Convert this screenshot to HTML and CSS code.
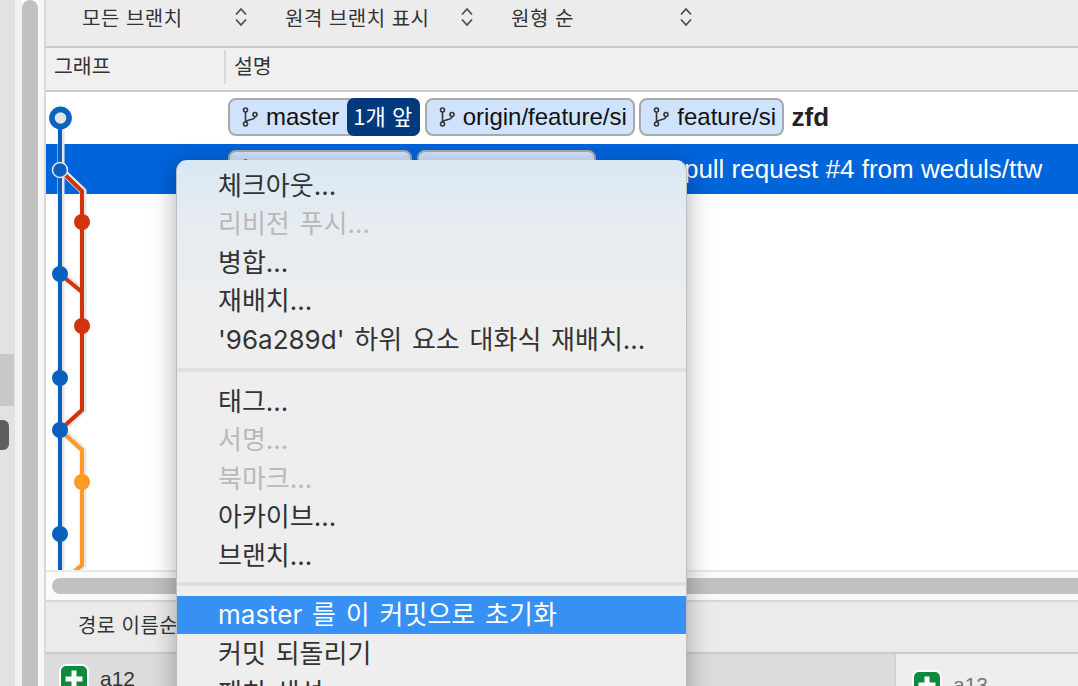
FILE: index.html
```html
<!DOCTYPE html>
<html lang="ko">
<head>
  <meta charset="UTF-8">
  <meta name="viewport" content="width=device-width, initial-scale=1.0">
  <title>Sourcetree</title>
  <link rel="stylesheet" href="styles.css">
</head>
<body>
  <svg class="defs" width="0" height="0">
    <symbol id="branch" viewBox="0 0 16 20">
      <circle cx="3.5" cy="3" r="2" />
      <circle cx="3.5" cy="17" r="2" />
      <circle cx="13" cy="7.5" r="2" />
      <path d="M3.5 5V15M13 9.5C13 13.5 5 12 4 15" />
    </symbol>
    <symbol id="updown" viewBox="0 0 14 20">
      <path d="M2 7.5L7 2L12 7.5M2 12.5L7 18L12 12.5" />
    </symbol>
    <symbol id="plus" viewBox="0 0 26 26">
      <path d="M13 4.5V21.5M4.5 13H21.5" />
    </symbol>
  </svg>

  <div class="app">
    <aside class="side">
      <div class="side-list">
        <div class="side-selected"></div>
        <div class="side-handle"></div>
      </div>
      <div class="side-gap"></div>
      <div class="side-scroll"></div>
      <div class="side-edge"></div>
    </aside>

    <main class="content">
      <div class="toolbar">
        <div class="select select-branch"><span>모든 브랜치</span><svg class="updown"><use href="#updown" /></svg></div>
        <div class="select select-remote"><span>원격 브랜치 표시</span><svg class="updown"><use href="#updown" /></svg></div>
        <div class="select select-order"><span>원형 순</span><svg class="updown"><use href="#updown" /></svg></div>
      </div>

      <div class="columns">
        <div class="col-graph">그래프</div>
        <div class="col-desc">설명</div>
      </div>

      <div class="table">
        <svg class="graph" width="60" height="478" viewBox="46 92 60 478">
          <g class="halo">
            <path d="M61 118V570" />
            <path d="M61 170L83 191V292L61 274" />
            <path d="M83 292V410L61 430" />
            <path d="M61 430L83 450V565L75 572" />
          </g>
          <g class="line-blue"><path d="M60 118V570" /></g>
          <g class="line-red">
            <path d="M60 170L82 191V410L60 430" />
            <path d="M60 274L82 292" />
          </g>
          <g class="line-orange"><path d="M60 430L82 450V565L74 572" /></g>
          <circle class="node-head" cx="60.5" cy="118" r="8.6" />
          <circle class="node-blue node-current" cx="60" cy="170" r="7.5" />
          <circle class="node-blue" cx="60" cy="274" r="8" />
          <circle class="node-blue" cx="60" cy="378" r="8" />
          <circle class="node-blue" cx="60" cy="430" r="8" />
          <circle class="node-blue" cx="60" cy="534" r="8" />
          <circle class="node-red" cx="82" cy="222" r="8" />
          <circle class="node-red" cx="82" cy="326" r="8" />
          <circle class="node-orange" cx="82" cy="482" r="8" />
        </svg>

        <div class="row">
          <span class="tag tag-master">
            <svg class="branch"><use href="#branch" /></svg>master<span class="ahead">1개 앞</span>
          </span>
          <span class="tag"><svg class="branch"><use href="#branch" /></svg>origin/feature/si</span>
          <span class="tag"><svg class="branch"><use href="#branch" /></svg>feature/si</span>
          <b class="subject">zfd</b>
        </div>
        <div class="row row-selected">
          <span class="tag tag-first"><svg class="branch"><use href="#branch" /></svg>develop</span>
          <span class="tag tag-second"><svg class="branch"><use href="#branch" /></svg>origin/develop</span>
          <span class="subject-plain">Merge pull request #4 from weduls/ttw</span>
        </div>
      </div>

      <div class="hscroll"><div class="hscroll-thumb"></div></div>

      <div class="pathbar"><span>경로 이름순</span></div>

      <div class="panes">
        <div class="pane pane-left">
          <span class="file-icon"><svg><use href="#plus" /></svg></span>
          <span class="file-name">a12</span>
        </div>
        <div class="pane pane-right">
          <span class="file-icon"><svg><use href="#plus" /></svg></span>
          <span class="file-name">a13</span>
        </div>
      </div>
    </main>
  </div>

  <div class="menu">
    <div class="menu-item">체크아웃...</div>
    <div class="menu-item off">리비전 푸시...</div>
    <div class="menu-item">병합...</div>
    <div class="menu-item">재배치...</div>
    <div class="menu-item">'96a289d' 하위 요소 대화식 재배치...</div>
    <div class="menu-sep"></div>
    <div class="menu-item">태그...</div>
    <div class="menu-item off">서명...</div>
    <div class="menu-item off">북마크...</div>
    <div class="menu-item">아카이브...</div>
    <div class="menu-item">브랜치...</div>
    <div class="menu-sep menu-sep-tight"></div>
    <div class="menu-item active">master 를 이 커밋으로 초기화</div>
    <div class="menu-item">커밋 되돌리기</div>
    <div class="menu-item">패치 생성...</div>
  </div>
</body>
</html>
```

FILE: styles.css
```css
* {
  box-sizing: border-box;
}

html, body {
  margin: 0;
  height: 100%;
  overflow: hidden;
}

body {
  position: relative;
  font-family: "Liberation Sans", "Noto Sans CJK KR", sans-serif;
  color: #333;
}

.defs {
  position: absolute;
}

.app {
  display: flex;
  height: 686px;
}

/* left edge: sidebar remains and its scrollbar */
.side {
  display: flex;
  flex: 0 0 46px;
}

.side-list {
  flex: 0 0 15px;
  background: #e3e2e2;
  padding-top: 354px;
}

.side-selected {
  width: 14px;
  height: 52px;
  background: #c9c8c8;
}

.side-handle {
  width: 9px;
  height: 30px;
  margin-top: 14px;
  background: #5f5f5f;
  border-radius: 0 6px 6px 0;
}

.side-gap {
  flex: 0 0 7px;
  background: #f2f2f2;
}

.side-scroll {
  flex: 0 0 16px;
  background: #c1c1c1;
  border-radius: 8px 8px 0 0;
}

.side-edge {
  flex: 0 0 8px;
  background: #f7f7f7;
  border-right: 2px solid #d9d9d9;
}

.content {
  flex: 1;
  display: flex;
  flex-direction: column;
  min-width: 0;
}

.toolbar {
  display: flex;
  flex: 0 0 48px;
  gap: 37px;
  padding: 0 0 12px 36px;
  align-items: center;
  background: #ececec;
  border-bottom: 2px solid #c9c9c9;
  font-family: "Noto Sans CJK KR", sans-serif;
  font-size: 20px;
}

.select {
  display: flex;
  justify-content: space-between;
  align-items: center;
  letter-spacing: 0.5px;
}

.select-branch {
  width: 166px;
}

.select-remote {
  width: 189px;
}

.select-order {
  width: 182px;
}

.updown {
  width: 14px;
  height: 20px;
  fill: none;
  stroke: #4d4d4d;
  stroke-width: 1.8;
}

.columns {
  display: flex;
  flex: 0 0 44px;
  padding-bottom: 2px;
  background: #f0f0f0;
  border-bottom: 2px solid #c9c9c9;
  font-family: "Noto Sans CJK KR", sans-serif;
  font-size: 20.5px;
}

.col-graph {
  width: 178px;
  padding: 2px 0 0 8px;
}

.col-desc {
  height: 34px;
  margin-top: 2px;
  padding: 0 0 0 8px;
  border-left: 2px solid #d9d9d9;
}

.table {
  position: relative;
  flex: 0 0 478px;
  background: #fff;
  overflow: hidden;
}

.row {
  display: flex;
  gap: 4.5px;
  height: 52px;
  padding: 6px 0 0 182px;
  font-size: 24px;
  white-space: nowrap;
}

.row-selected {
  height: 50px;
  background: #0064da;
  color: #fff;
}

.tag {
  display: inline-flex;
  align-items: center;
  height: 38px;
  padding: 0 6px 0 12px;
  background: #cfe3fd;
  border: 2px solid #a9a9a9;
  border-radius: 8px;
  color: #111;
}

.tag-master {
  padding-right: 0;
}

.tag-first {
  width: 184px;
}

.tag-second {
  width: 179px;
}

.branch {
  width: 16px;
  height: 20px;
  margin-right: 8px;
  fill: none;
  stroke: #333;
  stroke-width: 1.6;
}

.ahead {
  height: 38px;
  margin: 0 -2px 0 8px;
  padding: 0 8px 0 6px;
  background: #003a7d;
  border-radius: 7px;
  color: #fff;
  font-family: "Noto Sans CJK KR", sans-serif;
  font-size: 22px;
  line-height: 34px;
}

.subject {
  margin-left: 3px;
  font-size: 26px;
  line-height: 38px;
  color: #222;
}

.subject-plain {
  margin-left: 3px;
  font-size: 26px;
  line-height: 38px;
}

/* commit graph sits over the rows */
.graph {
  position: absolute;
  left: 0;
  top: 0;
  z-index: 1;
  fill: none;
}

.halo {
  stroke: #e6e6e6;
  stroke-width: 7;
}

.line-blue {
  stroke: #0a5fbf;
  stroke-width: 4;
}

.line-red {
  stroke: #d1340c;
  stroke-width: 4;
}

.line-orange {
  stroke: #ff9a26;
  stroke-width: 4;
}

.node-head {
  fill: #e4e4e4;
  stroke: #0a63c2;
  stroke-width: 5.6;
}

.node-blue {
  fill: #0a5fbf;
}

.node-current {
  stroke: #e2e2e2;
  stroke-width: 1.6;
}

.node-red {
  fill: #d1340c;
}

.node-orange {
  fill: #ff9a26;
}

.hscroll {
  flex: 0 0 32px;
  padding: 6px 0 0 6px;
  background: #fafafa;
  border-top: 2px solid #e8e8e8;
  border-bottom: 2px solid #d6d6d6;
}

.hscroll-thumb {
  height: 16px;
  background: #c1c1c1;
  border-radius: 8px 0 0 8px;
}

.pathbar {
  flex: 0 0 52px;
  padding: 8px 0 0 32px;
  background: #ebebeb;
  border-bottom: 2px solid #cbcbcb;
  font-family: "Noto Sans CJK KR", sans-serif;
  font-size: 20px;
  letter-spacing: 0.4px;
}

.panes {
  display: flex;
  flex: 1;
  min-height: 0;
}

.pane {
  display: flex;
  gap: 11px;
  font-size: 21px;
}

.pane-left {
  width: 850px;
  padding: 10px 0 0 13px;
  background: #dcdcdc;
  border-right: 2px solid #d2d2d2;
}

.pane-right {
  flex: 1;
  padding: 16px 0 0 16px;
  background: #eeeeee;
  color: #777;
}

.file-icon {
  flex: 0 0 30px;
  height: 30px;
  background: #0e8a3c;
  border: 2px solid #fff;
  border-radius: 7px;
}

.file-icon svg {
  display: block;
  width: 26px;
  height: 26px;
  fill: none;
  stroke: #fff;
  stroke-width: 5;
}

.file-name {
  line-height: 30px;
}

/* context menu */
.menu {
  position: absolute;
  left: 176px;
  top: 160px;
  width: 511px;
  height: 560px;
  padding-top: 6px;
  background: linear-gradient(to bottom, #d8e8f4 0, #e6ecf1 60px, #eeeeee 170px);
  border-radius: 11px 11px 0 0;
  border: 1px solid #bdbdbd;
  border-width: 0 1px;
  box-shadow: 0 6px 26px rgba(0, 0, 0, 0.32);
  font-family: Inter, "Noto Sans CJK KR", sans-serif;
  font-size: 26px;
  word-spacing: 2.5px;
  color: #333;
}

.menu-item {
  height: 38.4px;
  padding-left: 41px;
  line-height: 39px;
  white-space: nowrap;
}

.menu-item.off {
  color: #b9b9b9;
}

.menu-item.active {
  background: #3790f4;
  color: #fff;
  line-height: 37px;
}

.menu-sep {
  height: 4px;
  margin: 10px 0;
  background: #e0e0e0;
}

.menu-sep-tight {
  margin-top: 8px;
}
```
